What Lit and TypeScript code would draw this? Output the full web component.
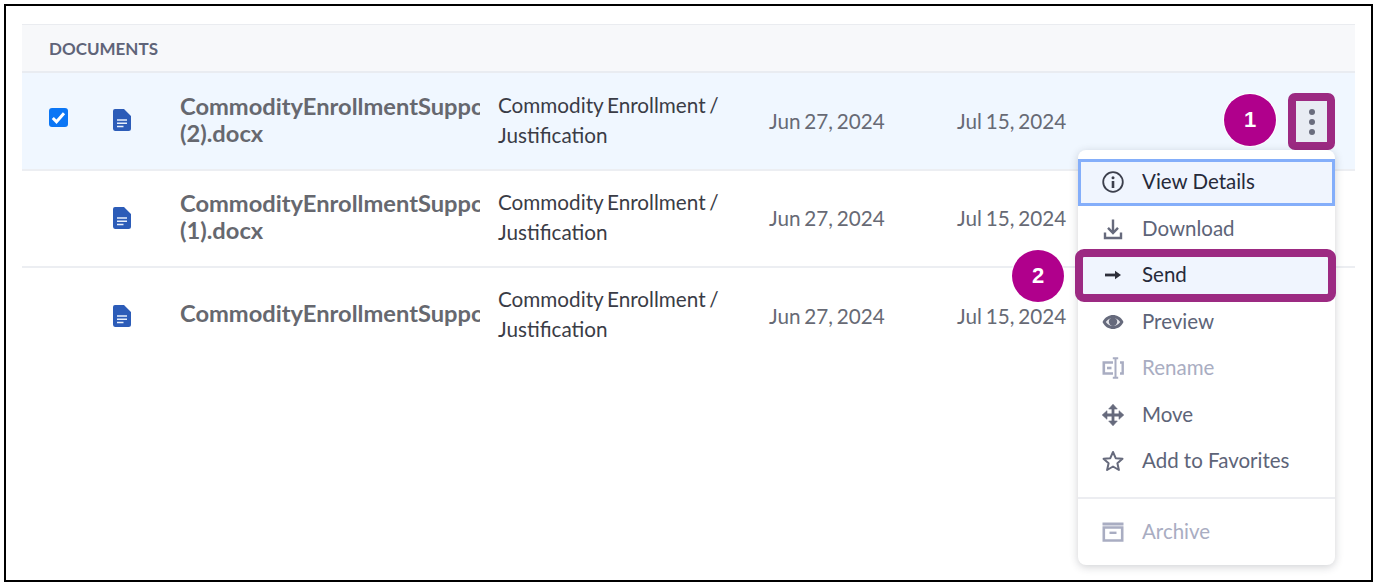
import { LitElement, html, css, svg } from "lit";
import { customElement } from "lit/decorators.js";

const rows = [
  { name: "CommodityEnrollmentSupport", ext: "(2).docx", selected: true },
  { name: "CommodityEnrollmentSupport", ext: "(1).docx", selected: false },
  { name: "CommodityEnrollmentSupport", ext: "", selected: false },
];

const docIcon = html`<svg class="doc" width="20" height="24" viewBox="0 0 20 24">
  <path d="M3 1h9l7 7v12.500a2.500 2.500 0 0 1-2.500 2.500h-13.500A2.500 2.500 0 0 1 1 20.500V3a2 2 0 0 1 2-2z" fill="#2c5cb8"/>
  <path d="M5 12h10M5 15.300h10M5 18.600h6.500" stroke="#e8f0fb" stroke-width="1.500" fill="none"/>
</svg>`;

const icons: Record<string, unknown> = {
  info: svg`<circle cx="11" cy="11" r="9.800" fill="none" stroke="currentColor" stroke-width="1.800"/><circle cx="11" cy="6.800" r="1.500" fill="currentColor"/><path d="M11 10v7" stroke="currentColor" stroke-width="2.600"/>`,
  download: svg`<path d="M11 1.500v13M6 9.800l5 5.200 5-5.200" fill="none" stroke="currentColor" stroke-width="2.400"/><path d="M3 14.500v5.500h16v-5.500" fill="none" stroke="currentColor" stroke-width="2.400"/>`,
  send: svg`<path d="M3 11h12" stroke="currentColor" stroke-width="2.800"/><path d="M13 6.800L19 11l-6 4.200z" fill="currentColor"/>`,
  eye: svg`<path d="M.5 11c2.500-5 6.500-7 10.500-7s8 2 10.500 7c-2.500 5-6.500 7-10.500 7S3 16 .5 11z" fill="currentColor"/><path d="M3.800 11c2-2.700 4.400-4 7.200-4s5.200 1.300 7.200 4c-2 2.700-4.400 4-7.200 4s-5.200-1.300-7.200-4z" fill="#e4e5ea"/><circle cx="11" cy="10.800" r="4.200" fill="currentColor"/>`,
  rename: svg`<path d="M11 5.500H1.800v11H11" fill="none" stroke="currentColor" stroke-width="2.600"/><path d="M5 11h4.500" stroke="currentColor" stroke-width="2.600"/><path d="M13.500 .5v21M10.800 1.200h5.400M10.800 20.800h5.400" fill="none" stroke="currentColor" stroke-width="2"/><path d="M18 5.500h2.700v11H18" fill="none" stroke="currentColor" stroke-width="2.400"/>`,
  move: svg`<path d="M11 3v16M3 11h16" stroke="currentColor" stroke-width="2.800"/><path d="M11 .2l4.300 4.800H6.700zM11 21.800l4.300-4.800H6.700zM.2 11L5 6.700v8.600zM21.800 11L17 6.700v8.600z" fill="currentColor" stroke="currentColor" stroke-width=".6" stroke-linejoin="round"/>`,
  star: svg`<path d="M11 2l2.700 6.200 6.800.6-5.100 4.500 1.500 6.700L11 16.500 5.100 20l1.500-6.700L1.500 8.800l6.800-.6z" fill="none" stroke="currentColor" stroke-width="2" stroke-linejoin="round"/>`,
  archive: svg`<path d="M.5 1.500h21v3H.5z" fill="currentColor"/><path d="M1.800 6.500h18.400v13H1.800z" fill="none" stroke="currentColor" stroke-width="2.600"/><path d="M7.500 11.800h7" stroke="currentColor" stroke-width="2.400"/>`,
};

const menu = [
  { id: "info", label: "View Details", cls: "focus" },
  { id: "download", label: "Download", cls: "" },
  { id: "send", label: "Send", cls: "hl" },
  { id: "eye", label: "Preview", cls: "" },
  { id: "rename", label: "Rename", cls: "off" },
  { id: "move", label: "Move", cls: "" },
  { id: "star", label: "Add to Favorites", cls: "" },
];

@customElement("app-root")
export class AppRoot extends LitElement {
  static styles = css`
    :host {
      display: block;
      width: 1377px;
      height: 587px;
      background: #fff;
      font-family: Lato, "Liberation Sans", sans-serif;
      box-sizing: border-box;
      padding: 4px 4px 5px 4px;
    }
    .frame {
      position: relative;
      box-sizing: border-box;
      height: 578px;
      border: 2px solid #000;
      padding: 18px 16px 0 16px;
      background: #fff;
    }
    .head {
      box-sizing: border-box;
      height: 49px;
      background: #f7f8fa;
      border-top: 1px solid #eaecf0;
      border-bottom: 2px solid #e9ecf1;
      padding-left: 27px;
      display: flex;
      align-items: center;
      font-size: 17px;
      font-weight: 700;
      color: #5f6478;
    }
    .row {
      box-sizing: border-box;
      height: 97px;
      display: grid;
      grid-template-columns: 63px 68px 300px 18px 271px 188px 1fr;
      align-items: center;
      padding-left: 27px;
      border-bottom: 2px solid #eceef2;
      color: #5f6068;
      font-size: 20.700px;
      word-spacing: -1.500px;
    }
    .row.sel { background: #f0f7ff; height: 98px; }
    .row.last { border-bottom: none; }
    .check {
      width: 19px;
      height: 19px;
      border-radius: 3px;
      background: #0b76f5;
      display: flex;
      align-items: center;
      justify-content: center;
      margin-top: -8px;
    }
    .doc { display: block; margin-top: -2px; }
    .name {
      grid-column: 3;
      overflow: hidden;
      white-space: nowrap;
      font-size: 23.700px;
      font-weight: 700;
      line-height: 27px;
      color: #66686f;
      margin-top: -3px;
    }
    .row.last .name { margin-top: -7px; }
    .type {
      grid-column: 5;
      line-height: 30px;
      color: #3a3c46;
      margin-top: -3px;
    }
    .row.last .type { margin-top: -5px; }
    .date { color: #676a75; margin-top: -1px; }
    .kebab {
      position: absolute;
      box-sizing: border-box;
      left: 1282px;
      top: 87px;
      width: 47px;
      height: 57px;
      border: 8px solid #9c2a82;
      border-radius: 7px;
      background: #e8ecf3;
      display: flex;
      flex-direction: column;
      align-items: center;
      justify-content: center;
      gap: 4px;
    }
    .kebab i {
      width: 6px;
      height: 6px;
      border-radius: 50%;
      background: #6a6d7d;
    }
    .badge {
      position: absolute;
      width: 52px;
      height: 52px;
      border-radius: 50%;
      background: #b0008c;
      box-shadow: 0 0 0 1px #fff;
      color: #fff;
      font-family: "Liberation Sans", Arial, sans-serif;
      font-weight: 700;
      font-size: 22px;
      display: flex;
      align-items: center;
      justify-content: center;
    }
    .b1 { left: 1218px; top: 88px; }
    .b2 { left: 1006px; top: 244px; }
    .menu {
      position: absolute;
      left: 1072px;
      top: 144px;
      width: 257px;
      height: 415px;
      box-sizing: border-box;
      background: #fff;
      border-radius: 8px;
      box-shadow: 0 2px 8px rgba(40, 44, 60, 0.22);
      padding-top: 9px;
      display: flex;
      flex-direction: column;
    }
    .item {
      box-sizing: border-box;
      height: 46.500px;
      display: flex;
      align-items: center;
      padding-left: 24px;
      gap: 18px;
      font-size: 20.500px;
      color: #5d6478;
      flex: none;
      position: relative;
    }
    .item span { margin-top: -2px; }
    .item svg { flex: none; display: block; color: #666a7c; }
    .item.off { color: #a9adc2; }
    .item.off svg { color: #a9adc2; }
    .item.focus {
      background: #f0f5fe;
      border: 3px solid #84aefa;
      color: #262a3a;
      padding-left: 21px;
    }
    .item.focus svg { color: #3c3f4c; }
    .item.hl { color: #262a3a; background: #f0f5fe; }
    .item.hl svg { color: #2d2f3a; }
    .item.hl::after {
      content: "";
      position: absolute;
      left: -3px;
      right: -1px;
      top: -3px;
      bottom: -3px;
      border: 8px solid #9c2a82;
      border-radius: 9px;
    }
    .sep {
      height: 2px;
      background: #ecedf1;
      margin-top: 12px;
      flex: none;
    }
    .arch { margin-top: 10px; }
  `;

  private icon(id: string) {
    return html`<svg width="22" height="22" viewBox="0 0 22 22">${icons[id]}</svg>`;
  }

  render() {
    return html`<div class="frame">
      <div class="head">DOCUMENTS</div>
      ${rows.map(
        (r, i) => html`<div class="row ${r.selected ? "sel" : ""} ${i === 2 ? "last" : ""}">
          <div>
            ${r.selected
              ? html`<div class="check">
                  <svg width="15" height="13" viewBox="0 0 15 13"><path d="M1.800 7l3.700 3.700L13 2.300" fill="none" stroke="#fff" stroke-width="3"/></svg>
                </div>`
              : ""}
          </div>
          <div>${docIcon}</div>
          <div class="name">${r.name}${r.ext ? html`<br />${r.ext}` : ""}</div>
          <div class="type">Commodity Enrollment /<br />Justification</div>
          <div class="date">Jun 27, 2024</div>
          <div class="date">Jul 15, 2024</div>
        </div>`
      )}
      <div class="badge b1">1</div>
      <div class="kebab"><i></i><i></i><i></i></div>
      <div class="menu">
        ${menu.map(
          (m) => html`<div class="item ${m.cls}">${this.icon(m.id)}<span>${m.label}</span></div>`
        )}
        <div class="sep"></div>
        <div class="item off arch">${this.icon("archive")}<span>Archive</span></div>
      </div>
      <div class="badge b2">2</div>
    </div>`;
  }
}
